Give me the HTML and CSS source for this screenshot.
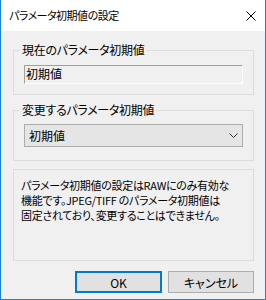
FILE: index.html
```html
<!DOCTYPE html>
<html lang="ja">
<head>
  <meta charset="UTF-8" />
  <meta name="viewport" content="width=device-width, initial-scale=1.0" />
  <title>パラメータ初期値の設定</title>
  <link rel="stylesheet" href="styles.css">
</head>
<body>
  <div class="dialog">
    <div class="title-bar">
      <span class="title">パラメータ初期値の設定</span>
      <button class="close-button" aria-label="閉じる">
        <svg width="10" height="10" viewBox="0 0 10 10">
          <path d="M0.5 0.5 L9.5 9.5 M9.5 0.5 L0.5 9.5" stroke="#000" stroke-width="1" fill="none" />
        </svg>
      </button>
    </div>

    <div class="dialog-body">
      <fieldset class="group current-group">
        <legend>現在のパラメータ初期値</legend>
        <div class="readonly-field">初期値</div>
      </fieldset>

      <fieldset class="group change-group">
        <legend>変更するパラメータ初期値</legend>
        <div class="combo">
          <span>初期値</span>
          <svg width="9" height="5" viewBox="0 0 9 5">
            <path d="M0.5 0.5 L4.5 4.5 L8.5 0.5" stroke="#333" stroke-width="1" fill="none" />
          </svg>
        </div>
      </fieldset>

      <div class="note">
        パラメータ初期値の設定はRAWにのみ有効な<br>
        機能です。JPEG/TIFF のパラメータ初期値は<br>
        固定されており、変更することはできません。
      </div>

      <div class="buttons">
        <button class="btn btn-default">OK</button>
        <button class="btn">キャンセル</button>
      </div>
    </div>
  </div>
</body>
</html>
```

FILE: styles.css
```css
* {
  margin: 0;
  padding: 0;
  box-sizing: border-box;
}

body {
  font-family: "Noto Sans CJK JP", "Noto Sans", sans-serif;
  font-size: 12px;
  font-feature-settings: "palt";
  color: #000;
  background: #f0f0f0;
}

.dialog {
  width: 266px;
  height: 300px;
  background: #f0f0f0;
  border: 1px solid #1883d7;
  border-top: none;
  display: flex;
  flex-direction: column;
}

.title-bar {
  height: 31px;
  background: #fff;
  display: flex;
  align-items: center;
  justify-content: space-between;
  padding-left: 8px;
  padding-bottom: 2px;
}

.title {
  font-size: 11px;
  line-height: 14px;
  letter-spacing: -0.5px;
}

.close-button {
  background: none;
  border: none;
  width: 30px;
  height: 20px;
  display: flex;
  align-items: center;
  justify-content: flex-end;
  padding-right: 9px;
  margin-top: 2px;
}

.dialog-body {
  padding: 12px 11px 0 12px;
  display: flex;
  flex-direction: column;
}

.group {
  border: 1px solid #dcdcdc;
  padding: 8px 10px 10px 10px;
}

.group legend {
  padding: 0 2px;
  margin-left: -4px;
  line-height: 14px;
  letter-spacing: -0.3px;
}

.readonly-field {
  height: 19px;
  border: 1px solid;
  border-color: #a0a0a0 #fff #fff #a0a0a0;
  line-height: 16px;
  padding-left: 1px;
}

.change-group {
  margin-top: 8px;
  padding-top: 7px;
  padding-bottom: 13px;
}

.combo {
  height: 23px;
  background: #e5e5e5;
  border: 1px solid #adadad;
  display: flex;
  align-items: center;
  justify-content: space-between;
  padding: 0 4px 0 4px;
}

.note {
  margin-top: 8px;
  height: 92px;
  border: 1px solid #dcdcdc;
  padding: 8px 0 0 7px;
  font-size: 11px;
  line-height: 15px;
  letter-spacing: -0.3px;
}

.buttons {
  display: flex;
  justify-content: flex-end;
  gap: 6px;
  margin-top: 10px;
}

.btn {
  font-family: inherit;
  font-size: 12px;
  font-feature-settings: "palt";
  width: 86px;
  height: 22px;
  background: #e1e1e1;
  border: 1px solid #adadad;
  color: #000;
}

.btn-default {
  width: 87px;
  border: 2px solid #0078d7;
}
```
